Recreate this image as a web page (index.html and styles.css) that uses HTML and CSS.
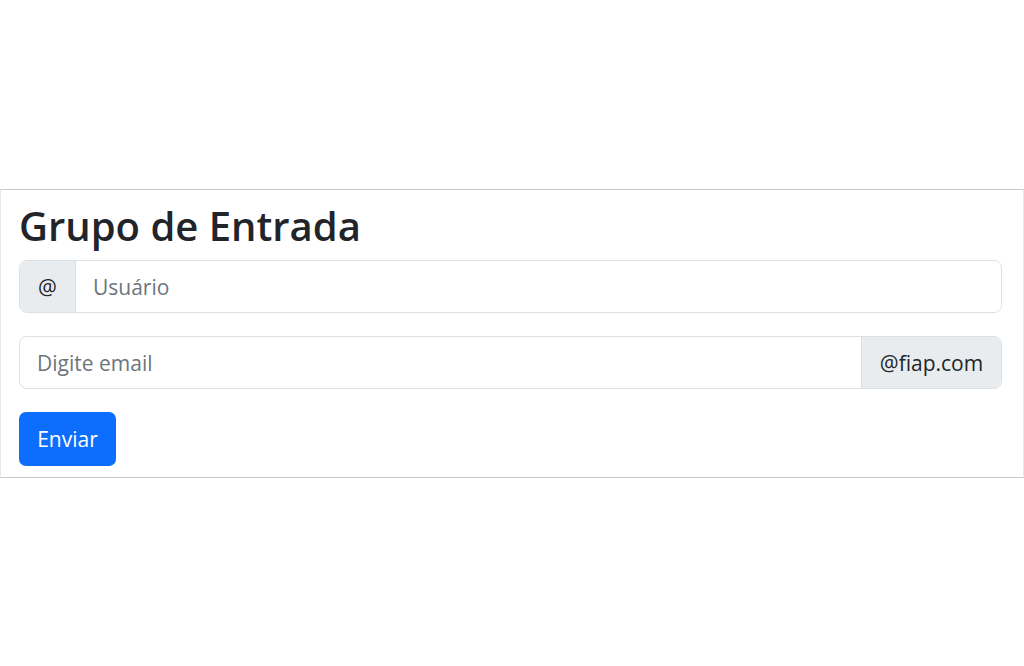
FILE: index.html
```html
<!DOCTYPE html>
<html lang="pt">
<head>
<meta charset="utf-8">
<title>Grupo de Entrada</title>
<link rel="stylesheet" href="styles.css">
</head>
<body>
<div class="page">
  <section class="panel">
    <h2 class="title">Grupo de Entrada</h2>
    <div class="input-group">
      <span class="addon">@</span>
      <input class="field" type="text" placeholder="Usuário">
    </div>
    <div class="input-group">
      <input class="field" type="text" placeholder="Digite email">
      <span class="addon addon-end">@fiap.com</span>
    </div>
    <button class="btn" type="button">Enviar</button>
  </section>
</div>
</body>
</html>
```
FILE: styles.css
```css
html, body {
  margin: 0;
  padding: 0;
  background: #ffffff;
}
body {
  font-family: "Open Sans", "Noto Sans", sans-serif;
  color: #212529;
}
.page {
  padding-top: 189px;
  width: 1024px;
  height: 666px;
  box-sizing: border-box;
}
.panel {
  border: 1px solid #c9c9c9;
  border-left-color: #e6e6e6;
  border-right-color: #e6e6e6;
  padding: 10px 21px 10px 18px;
  height: 289px;
  box-sizing: border-box;
  display: flex;
  flex-direction: column;
  align-items: flex-start;
}
.title {
  margin: 0;
  font-size: 40px;
  font-weight: 600;
  line-height: 52px;
  height: 60px;
  letter-spacing: 0;
  color: #212529;
}
.input-group {
  display: flex;
  align-self: stretch;
  height: 53px;
  box-sizing: border-box;
  border: 1.5px solid #dcdfe3;
  border-radius: 8px;
  overflow: hidden;
  margin-bottom: 23px;
}
.addon {
  display: flex;
  align-items: center;
  justify-content: center;
  background: #e9ecef;
  color: #212529;
  font-size: 21px;
  padding: 0 19px;
  width: 56px;
  box-sizing: border-box;
  border-right: 1.5px solid #dcdfe3;
}
.addon-end {
  width: 140px;
  border-right: none;
  border-left: 1.5px solid #dcdfe3;
  padding: 0;
}
.field {
  flex: 1;
  border: none;
  outline: none;
  font-family: inherit;
  font-size: 21px;
  padding: 0 17px;
  color: #212529;
  background: #fff;
  min-width: 0;
}
.field::placeholder {
  color: #6c757d;
}
.btn {
  background: #0d6efd;
  color: #ffffff;
  border: none;
  border-radius: 7px;
  font-family: inherit;
  font-size: 21px;
  width: 97px;
  height: 54px;
  padding: 0;
  margin-top: 0;
}
```
